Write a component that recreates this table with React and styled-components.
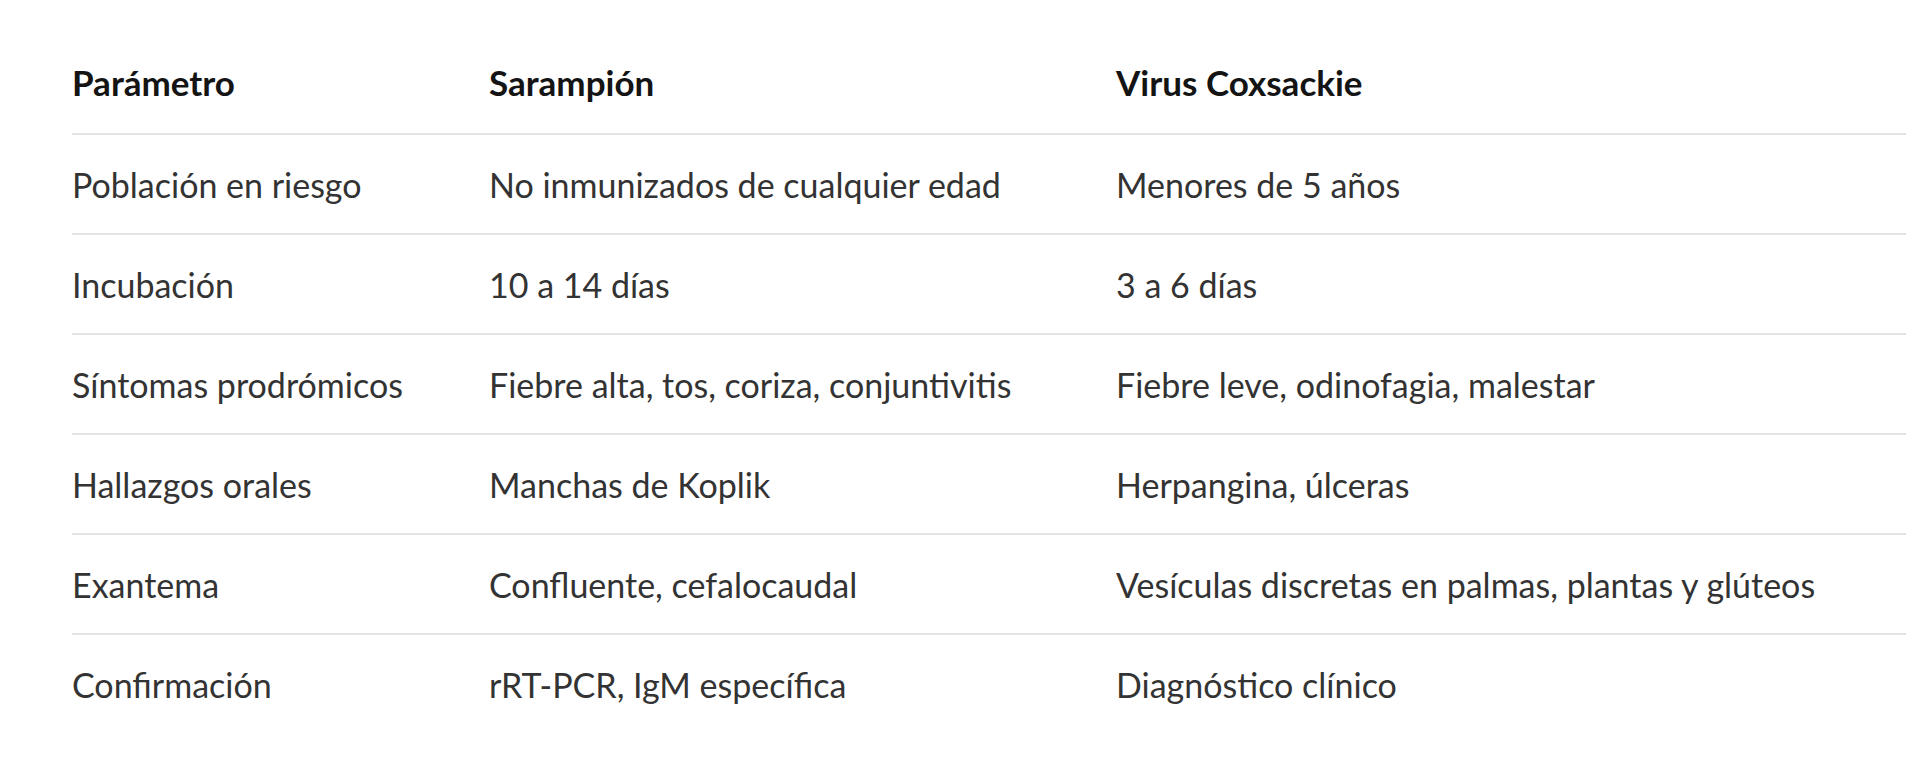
import React from "react";
import styled, { createGlobalStyle } from "styled-components";

const GlobalStyle = createGlobalStyle`
  html, body {
    margin: 0;
    padding: 0;
    background: #ffffff;
  }
  body {
    font-family: Lato, "Noto Sans", "Liberation Sans", sans-serif;
  }
`;

const Page = styled.div`
  padding: 35px 14px 0 72px;
`;

const Table = styled.table`
  width: 100%;
  border-collapse: collapse;
  table-layout: fixed;
`;

const Col = styled.col`
  width: ${({ $width }) => $width || "auto"};
`;

const Row = styled.tr`
  border-bottom: ${({ $last }) => ($last ? "none" : "2px solid #e4e4e4")};
`;

const HeadCell = styled.th`
  height: 94px;
  padding: 0 0 4px;
  text-align: left;
  vertical-align: middle;
  font-size: 35px;
  font-weight: 700;
  color: #141414;
  white-space: nowrap;
`;

const Cell = styled.td`
  height: 98px;
  padding: 0;
  vertical-align: middle;
  font-size: 34px;
  font-weight: 400;
  color: #333;
  white-space: nowrap;
`;

const rows = [
  ["Población en riesgo", "No inmunizados de cualquier edad", "Menores de 5 años"],
  ["Incubación", "10 a 14 días", "3 a 6 días"],
  ["Síntomas prodrómicos", "Fiebre alta, tos, coriza, conjuntivitis", "Fiebre leve, odinofagia, malestar"],
  ["Hallazgos orales", "Manchas de Koplik", "Herpangina, úlceras"],
  ["Exantema", "Confluente, cefalocaudal", "Vesículas discretas en palmas, plantas y glúteos"],
  ["Confirmación", "rRT-PCR, IgM específica", "Diagnóstico clínico"],
];

const App = () => {
  return (
    <Page>
      <GlobalStyle />
      <Table>
        <colgroup>
          <Col $width="417px" />
          <Col $width="627px" />
          <Col />
        </colgroup>
        <thead>
          <Row>
            <HeadCell>Parámetro</HeadCell>
            <HeadCell>Sarampión</HeadCell>
            <HeadCell>Virus Coxsackie</HeadCell>
          </Row>
        </thead>
        <tbody>
          {rows.map((r, i) => (
            <Row key={r[0]} $last={i === rows.length - 1}>
              {r.map(text => (
                <Cell key={text}>{text}</Cell>
              ))}
            </Row>
          ))}
        </tbody>
      </Table>
    </Page>
  );
};

export default App;
